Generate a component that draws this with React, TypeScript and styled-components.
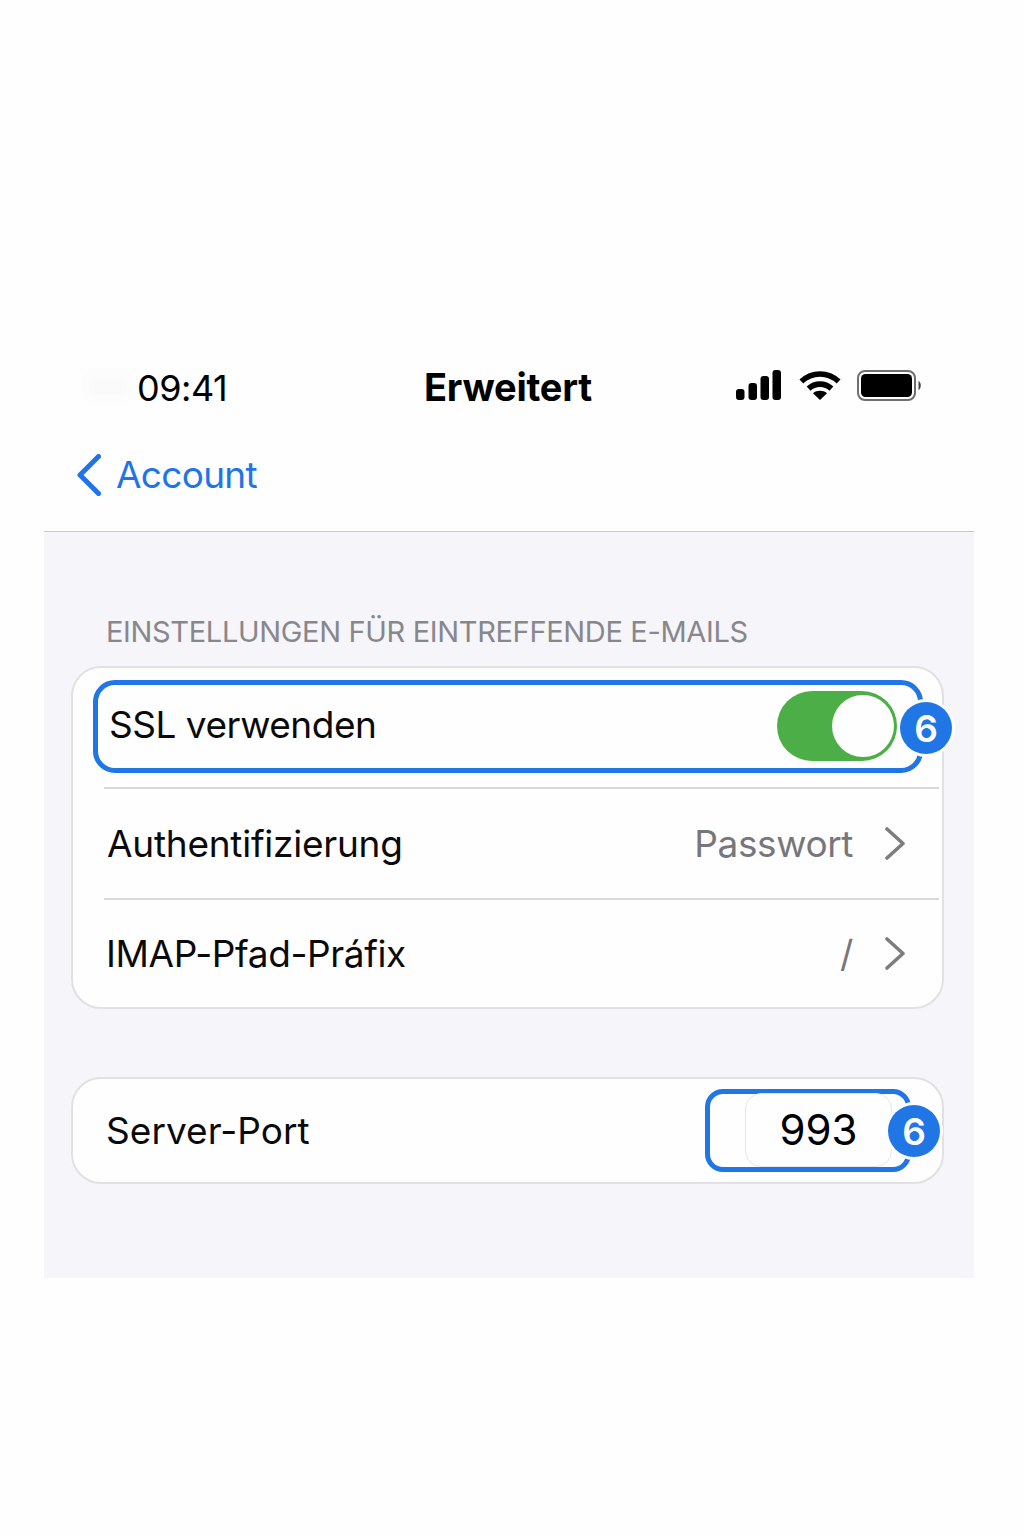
import React from "react";
import styled, { createGlobalStyle } from "styled-components";

const Global = createGlobalStyle`
  html, body { margin: 0; padding: 0; background: #fefefe; }
  body { font-family: Inter, "Liberation Sans", sans-serif; color: #000; -webkit-font-smoothing: antialiased; }
`;

const Page = styled.div`
  width: 1024px;
  height: 1536px;
  box-sizing: border-box;
  padding: 350px 50px 0 44px;
  overflow: hidden;
`;

const StatusBar = styled.div`
  height: 76px;
  display: grid;
  grid-template-columns: 1fr auto 1fr;
  align-items: center;
`;

const TimeCell = styled.div`
  position: relative;
  padding-left: 93px;
`;

const Smudge = styled.div`
  position: absolute;
  left: 42px;
  top: 6px;
  width: 44px;
  height: 26px;
  background: #fafafa;
  filter: blur(5px);
`;

const Time = styled.span`
  position: relative;
  font-size: 36px;
  font-weight: 400;
  letter-spacing: -0.5px;
`;

const Title = styled.div`
  font-size: 38px;
  font-weight: 700;
  letter-spacing: -0.2px;
  margin: -2px 2px 0 0;
`;

const StatusIcons = styled.div`
  display: flex;
  justify-content: flex-end;
  align-items: center;
  gap: 16px;
  padding-right: 52px;
  margin-top: -6px;
`;

const NavBar = styled.div`
  height: 106px;
  box-sizing: border-box;
  border-bottom: 1px solid #c9c9cc;
  padding: 0 0 8px 33px;
  display: flex;
  align-items: center;
  gap: 15px;
`;

const BackLabel = styled.span`
  font-size: 37px;
  color: #1f75e8;
  letter-spacing: -0.7px;
`;

const Content = styled.div`
  height: 746px;
  box-sizing: border-box;
  background: #f5f5fa;
  padding: 82px 30px 0 27px;
`;

const SectionTitle = styled.div`
  font-size: 29px;
  line-height: 35px;
  color: #87878c;
  margin: 0 0 17px 35px;
  letter-spacing: -0.33px;
`;

const Card = styled.div<{ $gap?: number }>`
  position: relative;
  background: #fefefe;
  border: 2px solid #e1e1e4;
  border-radius: 30px;
  margin-bottom: ${(p) => p.$gap ?? 0}px;
`;

const Highlight = styled.div`
  position: relative;
  height: 93px;
  box-sizing: border-box;
  margin: 12px 19px 0 20px;
  padding: 0 21px 4px 11px;
  border: 5px solid #2176e6;
  border-radius: 22px;
  display: flex;
  align-items: center;
  justify-content: space-between;
`;

const Divider = styled.div<{ $top?: number }>`
  height: 2px;
  background: #d9d9dc;
  margin: ${(p) => p.$top ?? 0}px 3px 0 31px;
`;

const Row = styled.div<{ $h: number; $left: number }>`
  position: relative;
  height: ${(p) => p.$h}px;
  box-sizing: border-box;
  padding: 0 37px 0 ${(p) => p.$left}px;
  display: flex;
  align-items: center;
  justify-content: space-between;
`;

const Label = styled.span<{ $spacing: number }>`
  font-size: 37px;
  letter-spacing: ${(p) => p.$spacing}px;
  color: #0a0a0a;
`;

const Trailing = styled.div`
  display: flex;
  align-items: center;
  gap: 32px;
`;

const Value = styled.span`
  font-size: 37px;
  letter-spacing: -0.4px;
  color: #77777b;
`;

const Toggle = styled.div`
  width: 120px;
  height: 70px;
  box-sizing: border-box;
  margin-top: 2px;
  border-radius: 35px;
  background: #4cae47;
  display: flex;
  justify-content: flex-end;
  align-items: center;
  padding-right: 3px;
`;

const Thumb = styled.div`
  width: 62px;
  height: 62px;
  border-radius: 50%;
  background: #fefefe;
`;

const Badge = styled.div<{ $right: number; $top: number }>`
  position: absolute;
  right: ${(p) => p.$right}px;
  top: ${(p) => p.$top}px;
  width: 52px;
  height: 52px;
  border-radius: 50%;
  background: #2176e6;
  box-shadow: 0 0 0 3px #fefefe;
  color: #fff;
  font-size: 37px;
  font-weight: 600;
  display: flex;
  align-items: center;
  justify-content: center;
`;

const PortFrame = styled.div`
  position: absolute;
  right: 31px;
  top: 10px;
  width: 206px;
  height: 83px;
  box-sizing: border-box;
  border: 5px solid #2176e6;
  border-radius: 18px;
`;

const PortInput = styled.div`
  position: absolute;
  left: 35px;
  top: -1px;
  width: 147px;
  height: 74px;
  box-sizing: border-box;
  background: #fefefe;
  border: 1px solid #e6e6e8;
  border-radius: 16px;
  font-size: 42px;
  display: flex;
  align-items: center;
  justify-content: center;
  padding: 0 0 2px 0;
`;

const SignalIcon = () => (
  <svg width="46" height="30" viewBox="0 0 46 30" fill="#000">
    <rect x="0" y="19" width="8.5" height="11" rx="3" />
    <rect x="12.5" y="13" width="8.5" height="17" rx="3" />
    <rect x="24.5" y="6" width="8.5" height="24" rx="3" />
    <rect x="36.5" y="0" width="8.5" height="30" rx="3" />
  </svg>
);

const WifiIcon = () => (
  <svg width="43" height="30" viewBox="-1 0 43 30" fill="none" stroke="#000" strokeWidth="5.6">
    <path d="M2.4 11.5 C13 1.5 29 1.5 39.6 11.5" />
    <path d="M9.6 18.6 C16 12.6 26 12.6 32.4 18.6" />
    <path d="M14 23.2 C18 20 24 20 28 23.2 L21 30 Z" fill="#000" stroke="none" />
  </svg>
);

const BatteryIcon = () => (
  <svg width="65" height="31" viewBox="0 0 65 31">
    <rect x="1" y="1" width="57" height="29" rx="7" fill="#fff" stroke="#6f6f6f" strokeWidth="2" />
    <rect x="4" y="4" width="51" height="23" rx="4.5" fill="#000" />
    <path d="M61.5 11 C64.5 12 64.5 19 61.5 20 Z" fill="#444" />
  </svg>
);

const BackChevron = () => (
  <svg width="24" height="42" viewBox="0 0 24 42" fill="none" stroke="#1f75e8" strokeWidth="5" strokeLinecap="round" strokeLinejoin="round">
    <path d="M21.5 2.5 L3 21 L21.5 39.5" />
  </svg>
);

const Chevron = () => (
  <svg width="20" height="33" viewBox="0 0 20 33" fill="none" stroke="#7d7d7f" strokeWidth="3.6" strokeLinecap="round" strokeLinejoin="round">
    <path d="M2 2 L18 16.5 L2 31" />
  </svg>
);

export default function App() {
  return (
    <Page>
      <Global />
      <StatusBar>
        <TimeCell>
          <Smudge />
          <Time>09:41</Time>
        </TimeCell>
        <Title>Erweitert</Title>
        <StatusIcons>
          <SignalIcon />
          <WifiIcon />
          <BatteryIcon />
        </StatusIcons>
      </StatusBar>
      <NavBar>
        <BackChevron />
        <BackLabel>Account</BackLabel>
      </NavBar>
      <Content>
        <SectionTitle>EINSTELLUNGEN FÜR EINTREFFENDE E-MAILS</SectionTitle>
        <Card $gap={68}>
          <Highlight>
            <Label $spacing={-0.5}>SSL verwenden</Label>
            <Toggle>
              <Thumb />
            </Toggle>
            <Badge $right={-34} $top={17}>6</Badge>
          </Highlight>
          <Divider $top={14} />
          <Row $h={109} $left={34}>
            <Label $spacing={-0.25}>Authentifizierung</Label>
            <Trailing>
              <Value>Passwort</Value>
              <Chevron />
            </Trailing>
          </Row>
          <Divider />
          <Row $h={107} $left={33}>
            <Label $spacing={-0.4}>IMAP-Pfad-Práfix</Label>
            <Trailing>
              <Value>/</Value>
              <Chevron />
            </Trailing>
          </Row>
        </Card>
        <Card>
          <Row $h={103} $left={33}>
            <Label $spacing={0.05}>Server-Port</Label>
            <PortFrame>
              <PortInput>993</PortInput>
            </PortFrame>
            <Badge $right={2} $top={26}>6</Badge>
          </Row>
        </Card>
      </Content>
    </Page>
  );
}
